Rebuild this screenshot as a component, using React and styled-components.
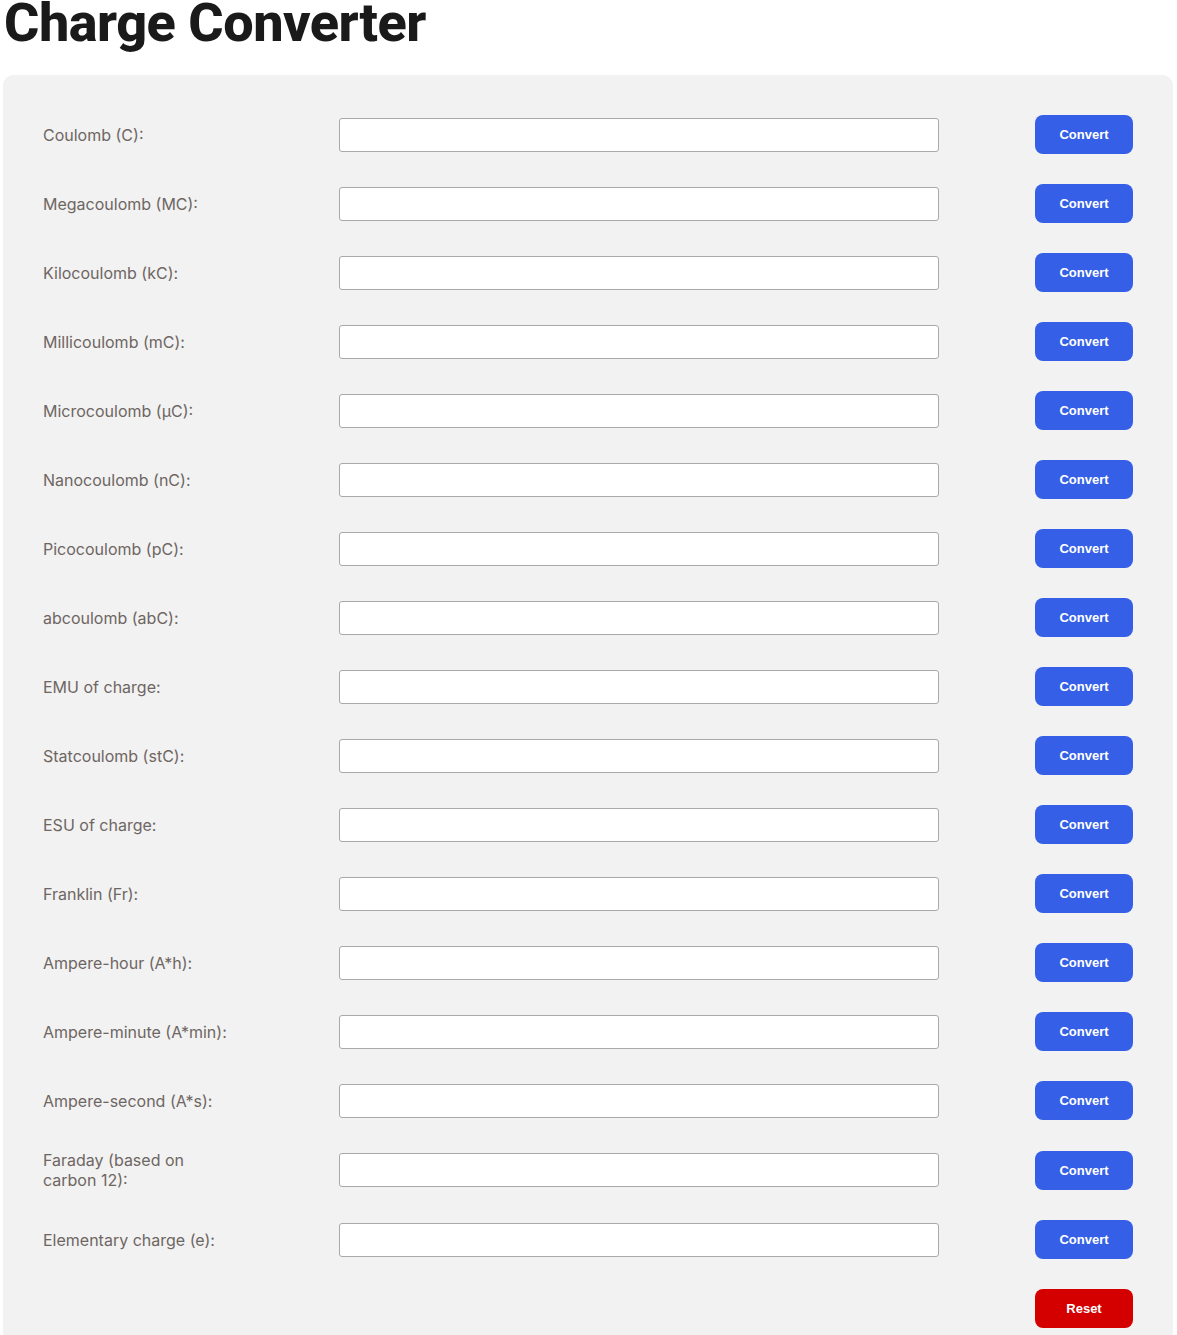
import React from "react";
import styled, { createGlobalStyle } from "styled-components";

const Global = createGlobalStyle`
  html, body { margin: 0; padding: 0; background: #ffffff; }
  body { font-family: Inter, "Noto Sans", sans-serif; }
  * { box-sizing: border-box; }
`;

const Page = styled.div`
  padding: 0 4px 0 3px;
`;

const Title = styled.h1`
  margin: 0 0 0 1px;
  font-family: Roboto, Inter, sans-serif;
  font-weight: 800;
  font-size: 54px;
  line-height: 46px;
  letter-spacing: -0.5px;
  color: #1a1a1a;
`;

const Panel = styled.div`
  margin-top: 29px;
  background: #f2f2f2;
  border-radius: 10px;
  padding: 40px;
  display: flex;
  flex-direction: column;
  gap: 30px;
`;

const Row = styled.div`
  display: flex;
  align-items: center;
  min-height: 39px;
`;

const Label = styled.label`
  flex: 0 0 190px;
  margin-right: 106px;
  font-family: Inter, sans-serif;
  font-size: 16px;
  line-height: 20px;
  color: #6e6662;
`;

const Input = styled.input`
  width: 600px;
  height: 34px;
  border: 1px solid #a9a9a9;
  border-radius: 3px;
  background: #ffffff;
  padding: 0 8px;
  font-size: 16px;
`;

const Button = styled.button`
  margin-left: auto;
  width: 98px;
  height: 39px;
  border: none;
  border-radius: 8px;
  background: ${(p) => (p.$danger ? "#d40000" : "#355fe6")};
  color: #ffffff;
  font-family: "Liberation Sans", Arial, sans-serif;
  font-weight: 700;
  font-size: 13px;
  cursor: pointer;
`;

const units = [
  "Coulomb (C):",
  "Megacoulomb (MC):",
  "Kilocoulomb (kC):",
  "Millicoulomb (mC):",
  "Microcoulomb (µC):",
  "Nanocoulomb (nC):",
  "Picocoulomb (pC):",
  "abcoulomb (abC):",
  "EMU of charge:",
  "Statcoulomb (stC):",
  "ESU of charge:",
  "Franklin (Fr):",
  "Ampere-hour (A*h):",
  "Ampere-minute (A*min):",
  "Ampere-second (A*s):",
  "Faraday (based on carbon 12):",
  "Elementary charge (e):",
];

export default function App() {
  return (
    <Page>
      <Global />
      <Title>Charge Converter</Title>
      <Panel>
        {units.map((u) => (
          <Row key={u}>
            <Label>{u}</Label>
            <Input type="text" />
            <Button>Convert</Button>
          </Row>
        ))}
        <Row>
          <Button $danger>Reset</Button>
        </Row>
      </Panel>
    </Page>
  );
}
